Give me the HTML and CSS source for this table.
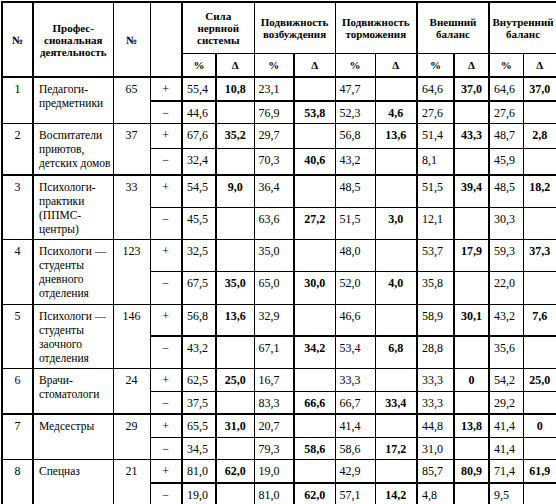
FILE: index.html
```html
<!DOCTYPE html>
<html lang="ru">
<head>
<meta charset="utf-8">
<title>Таблица</title>
<link rel="stylesheet" href="styles.css">
</head>
<body>
<table class="grid">
  <colgroup>
    <col class="c-no">
    <col class="c-name bl">
    <col class="c-n">
    <col class="c-sign">
    <col class="c-p1 bl">
    <col class="c-d1 bl">
    <col class="c-p2">
    <col class="c-d2 bl">
    <col class="c-p3">
    <col class="c-d3">
    <col class="c-p4 bl">
    <col class="c-d4 bl">
    <col class="c-p5 bl">
    <col class="c-d5">
  </colgroup>
  <thead>
    <tr class="h1">
      <th rowspan="2">№</th>
      <th rowspan="2">Профес-<br>сиональная<br>деятельность</th>
      <th rowspan="2">№</th>
      <th rowspan="2"></th>
      <th colspan="2">Сила<br>нервной<br>системы</th>
      <th colspan="2">Подвижность<br>возбуждения</th>
      <th colspan="2">Подвижность<br>торможения</th>
      <th colspan="2">Внешний<br>баланс</th>
      <th colspan="2">Внутренний<br>баланс</th>
    </tr>
    <tr class="h2">
      <th>%</th><th>Δ</th><th>%</th><th>Δ</th><th>%</th><th>Δ</th><th>%</th><th>Δ</th><th>%</th><th>Δ</th>
    </tr>
  </thead>
  <tbody>
    <tr class="tk">
      <td class="no" rowspan="2">1</td>
      <td class="name" rowspan="2">Педагоги-<br>предметники</td>
      <td class="n" rowspan="2">65</td>
      <td class="sign">+</td>
      <td class="p">55,4</td><td class="d">10,8</td>
      <td class="p">23,1</td><td class="d"></td>
      <td class="p">47,7</td><td class="d"></td>
      <td class="p">64,6</td><td class="d">37,0</td>
      <td class="p">64,6</td><td class="d">37,0</td>
    </tr>
    <tr class="tk">
      <td class="sign">−</td>
      <td class="p">44,6</td><td class="d"></td>
      <td class="p">76,9</td><td class="d">53,8</td>
      <td class="p">52,3</td><td class="d">4,6</td>
      <td class="p">27,6</td><td class="d"></td>
      <td class="p">27,6</td><td class="d"></td>
    </tr>

    <tr>
      <td class="no" rowspan="2">2</td>
      <td class="name" rowspan="2">Воспитатели<br>приютов,<br>детских домов</td>
      <td class="n" rowspan="2">37</td>
      <td class="sign">+</td>
      <td class="p">67,6</td><td class="d">35,2</td>
      <td class="p">29,7</td><td class="d"></td>
      <td class="p">56,8</td><td class="d">13,6</td>
      <td class="p">51,4</td><td class="d">43,3</td>
      <td class="p">48,7</td><td class="d">2,8</td>
    </tr>
    <tr>
      <td class="sign">−</td>
      <td class="p">32,4</td><td class="d"></td>
      <td class="p">70,3</td><td class="d">40,6</td>
      <td class="p">43,2</td><td class="d"></td>
      <td class="p">8,1</td><td class="d"></td>
      <td class="p">45,9</td><td class="d"></td>
    </tr>

    <tr class="tk">
      <td class="no" rowspan="2">3</td>
      <td class="name" rowspan="2">Психологи-<br>практики<br>(ППМС-<br>центры)</td>
      <td class="n" rowspan="2">33</td>
      <td class="sign">+</td>
      <td class="p">54,5</td><td class="d">9,0</td>
      <td class="p">36,4</td><td class="d"></td>
      <td class="p">48,5</td><td class="d"></td>
      <td class="p">51,5</td><td class="d">39,4</td>
      <td class="p">48,5</td><td class="d">18,2</td>
    </tr>
    <tr>
      <td class="sign">−</td>
      <td class="p">45,5</td><td class="d"></td>
      <td class="p">63,6</td><td class="d">27,2</td>
      <td class="p">51,5</td><td class="d">3,0</td>
      <td class="p">12,1</td><td class="d"></td>
      <td class="p">30,3</td><td class="d"></td>
    </tr>

    <tr>
      <td class="no" rowspan="2">4</td>
      <td class="name" rowspan="2">Психологи —<br>студенты<br>дневного<br>отделения</td>
      <td class="n" rowspan="2">123</td>
      <td class="sign">+</td>
      <td class="p">32,5</td><td class="d"></td>
      <td class="p">35,0</td><td class="d"></td>
      <td class="p">48,0</td><td class="d"></td>
      <td class="p">53,7</td><td class="d">17,9</td>
      <td class="p">59,3</td><td class="d">37,3</td>
    </tr>
    <tr>
      <td class="sign">−</td>
      <td class="p">67,5</td><td class="d">35,0</td>
      <td class="p">65,0</td><td class="d">30,0</td>
      <td class="p">52,0</td><td class="d">4,0</td>
      <td class="p">35,8</td><td class="d"></td>
      <td class="p">22,0</td><td class="d"></td>
    </tr>

    <tr>
      <td class="no" rowspan="2">5</td>
      <td class="name" rowspan="2">Психологи —<br>студенты<br>заочного<br>отделения</td>
      <td class="n" rowspan="2">146</td>
      <td class="sign">+</td>
      <td class="p">56,8</td><td class="d">13,6</td>
      <td class="p">32,9</td><td class="d"></td>
      <td class="p">46,6</td><td class="d"></td>
      <td class="p">58,9</td><td class="d">30,1</td>
      <td class="p">43,2</td><td class="d">7,6</td>
    </tr>
    <tr class="tk">
      <td class="sign">−</td>
      <td class="p">43,2</td><td class="d"></td>
      <td class="p">67,1</td><td class="d">34,2</td>
      <td class="p">53,4</td><td class="d">6,8</td>
      <td class="p">28,8</td><td class="d"></td>
      <td class="p">35,6</td><td class="d"></td>
    </tr>

    <tr>
      <td class="no" rowspan="2">6</td>
      <td class="name" rowspan="2">Врачи-<br>стоматологи</td>
      <td class="n" rowspan="2">24</td>
      <td class="sign">+</td>
      <td class="p">62,5</td><td class="d">25,0</td>
      <td class="p">16,7</td><td class="d"></td>
      <td class="p">33,3</td><td class="d"></td>
      <td class="p">33,3</td><td class="d">0</td>
      <td class="p">54,2</td><td class="d">25,0</td>
    </tr>
    <tr>
      <td class="sign">−</td>
      <td class="p">37,5</td><td class="d"></td>
      <td class="p">83,3</td><td class="d">66,6</td>
      <td class="p">66,7</td><td class="d">33,4</td>
      <td class="p">33,3</td><td class="d"></td>
      <td class="p">29,2</td><td class="d"></td>
    </tr>

    <tr class="tk">
      <td class="no" rowspan="2">7</td>
      <td class="name" rowspan="2">Медсестры</td>
      <td class="n" rowspan="2">29</td>
      <td class="sign">+</td>
      <td class="p">65,5</td><td class="d">31,0</td>
      <td class="p">20,7</td><td class="d"></td>
      <td class="p">41,4</td><td class="d"></td>
      <td class="p">44,8</td><td class="d">13,8</td>
      <td class="p">41,4</td><td class="d">0</td>
    </tr>
    <tr>
      <td class="sign">−</td>
      <td class="p">34,5</td><td class="d"></td>
      <td class="p">79,3</td><td class="d">58,6</td>
      <td class="p">58,6</td><td class="d">17,2</td>
      <td class="p">31,0</td><td class="d"></td>
      <td class="p">41,4</td><td class="d"></td>
    </tr>

    <tr>
      <td class="no" rowspan="2">8</td>
      <td class="name" rowspan="2">Спецназ</td>
      <td class="n" rowspan="2">21</td>
      <td class="sign">+</td>
      <td class="p">81,0</td><td class="d">62,0</td>
      <td class="p">19,0</td><td class="d"></td>
      <td class="p">42,9</td><td class="d"></td>
      <td class="p">85,7</td><td class="d">80,9</td>
      <td class="p">71,4</td><td class="d">61,9</td>
    </tr>
    <tr class="tk">
      <td class="sign">−</td>
      <td class="p">19,0</td><td class="d"></td>
      <td class="p">81,0</td><td class="d">62,0</td>
      <td class="p">57,1</td><td class="d">14,2</td>
      <td class="p">4,8</td><td class="d"></td>
      <td class="p">9,5</td><td class="d"></td>
    </tr>
  </tbody>
</table>
</body>
</html>
```

FILE: styles.css
```css
html, body {
  margin: 0;
  padding: 0;
  background: #fff;
}

body {
  font-family: "Liberation Serif", "Times New Roman", serif;
  font-size: 12px;
  color: #000;
}

.grid {
  border-collapse: collapse;
  table-layout: fixed;
  width: 555px;
  margin: 1px 0 0 1px;
  border: 2px solid #000;
}

.c-no   { width: 31px; }
.c-name { width: 80px; }
.c-n    { width: 37px; }
.c-sign { width: 32px; }
.c-p1   { width: 34px; }
.c-d1   { width: 38px; }
.c-p2   { width: 40px; }
.c-d2   { width: 41px; }
.c-p3   { width: 40px; }
.c-d3   { width: 42px; }
.c-p4   { width: 37px; }
.c-d4   { width: 35px; }
.c-p5   { width: 34px; }
.c-d5   { width: 34px; }

col.bl {
  border-left: 2px solid #000;
}

th, td {
  border: 1px solid #000;
}

th {
  font-size: 11px;
  line-height: 12px;
  font-weight: bold;
  text-align: center;
  vertical-align: middle;
  padding: 1px 1px;
}

.h1 { height: 51px; }
.h2 { height: 24px; }

td {
  line-height: 14px;
  vertical-align: top;
  padding: 4px 4px 3.5px;
  white-space: nowrap;
}

tr.tk td {
  border-top-width: 2px;
}

td.no   { text-align: center; }
td.name { text-align: left; padding-left: 5px; font-size: 11.5px; }
td.n    { text-align: center; }
td.sign { text-align: center; }
td.p    { text-align: left; }
td.d    { text-align: center; font-weight: bold; }
```
